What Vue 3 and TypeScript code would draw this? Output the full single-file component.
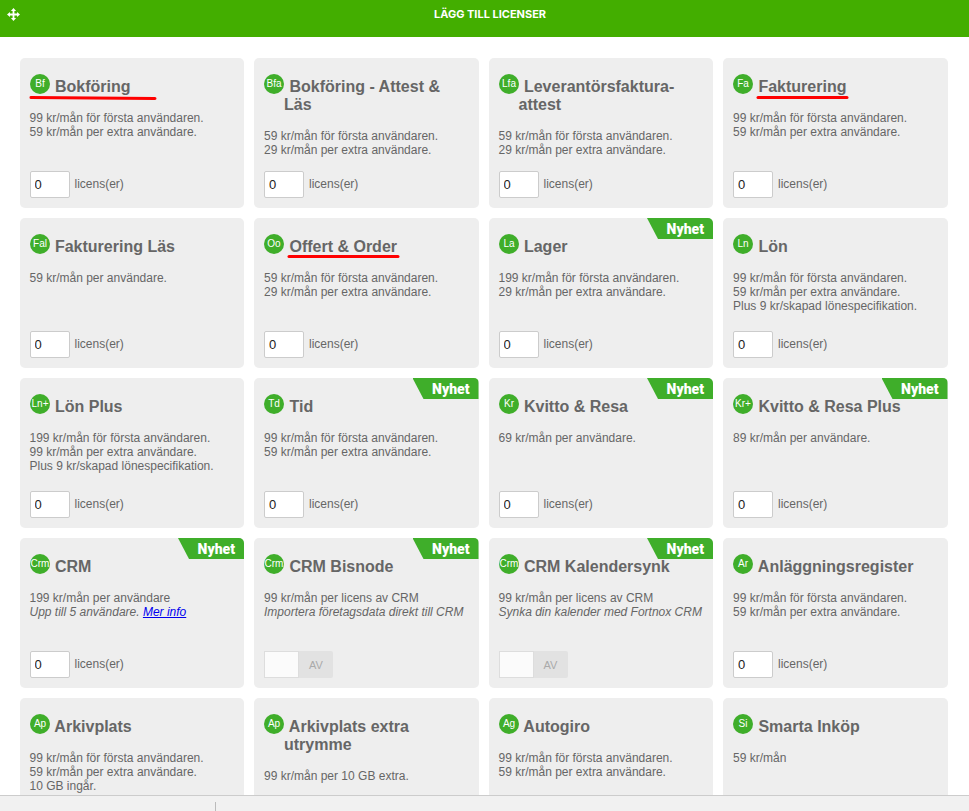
<script setup lang="ts">
import { reactive } from 'vue'

interface Stroke {
  x1: number
  y1: number
  x2: number
  y2: number
}

interface License {
  code: string
  name: string
  lines: string[]
  note?: string
  link?: string
  isNew?: boolean
  toggle?: boolean
  count: string
  mark?: Stroke
}

const licenses = reactive<License[]>([
  { code: 'Bf', name: 'Bokföring', lines: ['99 kr/mån för första användaren.', '59 kr/mån per extra användare.'], count: '0', mark: { x1: 11, y1: 39.5, x2: 135, y2: 40.5 } },
  { code: 'Bfa', name: 'Bokföring - Attest & Läs', lines: ['59 kr/mån för första användaren.', '29 kr/mån per extra användare.'], count: '0' },
  { code: 'Lfa', name: 'Leverantörsfaktura-attest', lines: ['59 kr/mån för första användaren.', '29 kr/mån per extra användare.'], count: '0' },
  { code: 'Fa', name: 'Fakturering', lines: ['99 kr/mån för första användaren.', '59 kr/mån per extra användare.'], count: '0', mark: { x1: 35, y1: 39.5, x2: 124, y2: 39.5 } },
  { code: 'Fal', name: 'Fakturering Läs', lines: ['59 kr/mån per användare.'], count: '0' },
  { code: 'Oo', name: 'Offert & Order', lines: ['59 kr/mån för första användaren.', '29 kr/mån per extra användare.'], count: '0', mark: { x1: 35, y1: 38.5, x2: 144, y2: 38.5 } },
  { code: 'La', name: 'Lager', lines: ['199 kr/mån för första användaren.', '29 kr/mån per extra användare.'], count: '0', isNew: true },
  { code: 'Ln', name: 'Lön', lines: ['99 kr/mån för första användaren.', '59 kr/mån per extra användare.', 'Plus 9 kr/skapad lönespecifikation.'], count: '0' },
  { code: 'Ln+', name: 'Lön Plus', lines: ['199 kr/mån för första användaren.', '99 kr/mån per extra användare.', 'Plus 9 kr/skapad lönespecifikation.'], count: '0' },
  { code: 'Td', name: 'Tid', lines: ['99 kr/mån för första användaren.', '59 kr/mån per extra användare.'], count: '0', isNew: true },
  { code: 'Kr', name: 'Kvitto & Resa', lines: ['69 kr/mån per användare.'], count: '0', isNew: true },
  { code: 'Kr+', name: 'Kvitto & Resa Plus', lines: ['89 kr/mån per användare.'], count: '0', isNew: true },
  { code: 'Crm', name: 'CRM', lines: ['199 kr/mån per användare'], note: 'Upp till 5 användare.', link: 'Mer info', count: '0', isNew: true },
  { code: 'Crm', name: 'CRM Bisnode', lines: ['99 kr/mån per licens av CRM'], note: 'Importera företagsdata direkt till CRM', count: '0', isNew: true, toggle: true },
  { code: 'Crm', name: 'CRM Kalendersynk', lines: ['99 kr/mån per licens av CRM'], note: 'Synka din kalender med Fortnox CRM', count: '0', isNew: true, toggle: true },
  { code: 'Ar', name: 'Anläggningsregister', lines: ['99 kr/mån för första användaren.', '59 kr/mån per extra användare.'], count: '0' },
  { code: 'Ap', name: 'Arkivplats', lines: ['99 kr/mån för första användaren.', '59 kr/mån per extra användare.', '10 GB ingår.'], count: '0' },
  { code: 'Ap', name: 'Arkivplats extra utrymme', lines: ['99 kr/mån per 10 GB extra.'], count: '0' },
  { code: 'Ag', name: 'Autogiro', lines: ['99 kr/mån för första användaren.', '59 kr/mån per extra användare.'], count: '0' },
  { code: 'Si', name: 'Smarta Inköp', lines: ['59 kr/mån'], count: '0' },
])
</script>

<template>
  <div class="page">
    <header class="bar">
      <svg class="move" width="13" height="13" viewBox="0 0 13 13" aria-hidden="true">
        <path d="M6.5 2v9M2 6.5h9" stroke="#fff" stroke-width="1.8" />
        <path d="M6.5 0l2.6 3H3.9zM6.5 13l2.6-3H3.9zM0 6.5l3-2.6v5.2zM13 6.5l-3-2.6v5.2z" fill="#fff" />
      </svg>
      <h1 class="title">LÄGG TILL LICENSER</h1>
    </header>

    <main class="content">
      <div class="grid">
        <section v-for="(item, i) in licenses" :key="i" class="card">
          <h2 class="name">
            <svg class="badge" width="20" height="20" viewBox="0 0 20 20">
              <circle cx="10" cy="10" r="10" fill="#3fae2a" />
              <text class="code" x="10" y="13" text-anchor="middle">{{ item.code }}</text>
            </svg>
            {{ item.name }}
          </h2>
          <p class="info">
            <span v-for="line in item.lines" :key="line" class="line">{{ line }}</span>
            <em v-if="item.note" class="line">{{ item.note }} <a v-if="item.link" href="#">{{ item.link }}</a></em>
          </p>
          <div class="control">
            <button v-if="item.toggle" class="toggle" type="button" role="switch" aria-checked="false" :aria-label="item.name" disabled>
              <span class="knob"></span>
              <span class="state">AV</span>
            </button>
            <template v-else>
              <input :id="`license-${i}`" v-model="item.count" class="count" type="text" inputmode="numeric" />
              <label class="unit" :for="`license-${i}`">licens(er)</label>
            </template>
          </div>
          <span v-if="item.isNew" class="ribbon">Nyhet</span>
          <svg v-if="item.mark" class="mark" aria-hidden="true">
            <line :x1="item.mark.x1" :y1="item.mark.y1" :x2="item.mark.x2" :y2="item.mark.y2" stroke="#f00" stroke-width="3" stroke-linecap="round" />
          </svg>
        </section>
      </div>
    </main>

    <footer class="footer">
      <div class="divider"></div>
    </footer>
  </div>
</template>

<style>
body {
  margin: 0;
  background: #fff;
}
</style>

<style scoped>
.page {
  display: flex;
  flex-direction: column;
  height: 100vh;
  font-family: "Liberation Sans", Arial, sans-serif;
  font-size: 12px;
  line-height: 14px;
  color: #666;
}
.bar {
  display: flex;
  flex: none;
  align-items: flex-start;
  box-sizing: border-box;
  height: 37px;
  padding: 8px 9px 0 7px;
  background: #43ae00;
}
.move {
  display: block;
  flex: none;
}
.title {
  flex: 1;
  margin: 0;
  font-family: Inter, Roboto, sans-serif;
  font-size: 11px;
  line-height: 12px;
  font-weight: 700;
  text-align: center;
  color: #fff;
}
.content {
  flex: 1;
  min-height: 0;
  padding: 21px 2px 0 0;
  overflow-y: auto;
  scrollbar-width: none;
}
.grid {
  display: grid;
  grid-template-columns: repeat(4, minmax(0, 1fr));
  grid-auto-rows: minmax(150px, auto);
  gap: 10px;
  width: calc(100% - 39px);
  margin: 0 auto;
}
.card {
  position: relative;
  display: flex;
  flex-direction: column;
  box-sizing: border-box;
  padding: 16px 10px 10px;
  border-radius: 5px;
  background: #eee;
}
.name {
  margin: 0 0 15px;
  padding-left: 20px;
  font-size: 16px;
  line-height: 18px;
  font-weight: 700;
  text-indent: -20px;
}
.badge {
  margin-right: 1px;
  vertical-align: -2px;
}
.code {
  fill: #fff;
  font-size: 10px;
  font-weight: 400;
  text-indent: 0;
}
.info {
  margin: 0;
}
.line {
  display: block;
  white-space: nowrap;
}
.line a {
  color: #00e;
}
.control {
  display: flex;
  align-items: flex-start;
  gap: 5px;
  margin-top: auto;
}
.unit {
  line-height: 26px;
}
.count {
  box-sizing: border-box;
  width: 40px;
  height: 27px;
  padding: 0 4px;
  border: 1px solid #ccc;
  border-radius: 2px;
  background: #fff;
  font-family: inherit;
  font-size: 13px;
  color: #222;
}
.toggle {
  display: flex;
  width: 69px;
  height: 27px;
  padding: 0;
  border: 0;
  border-radius: 2px;
  background: #e2e2e2;
  font-family: inherit;
  font-size: 11px;
  line-height: 28px;
  color: #aaa;
}
.knob {
  box-sizing: border-box;
  width: 35px;
  height: 27px;
  border: 1px solid #ddd;
  background: #fbfbfb;
}
.state {
  flex: 1;
  text-align: center;
}
.ribbon {
  position: absolute;
  top: 0;
  right: 0;
  box-sizing: border-box;
  width: 66px;
  height: 21px;
  padding-right: 9px;
  border-top-right-radius: 5px;
  background: #3fae2a;
  clip-path: polygon(0 0, 100% 0, 100% 100%, 11px 100%);
  font-family: Roboto, "Liberation Sans", sans-serif;
  font-size: 14px;
  line-height: 22px;
  font-weight: 900;
  text-align: right;
  color: #fff;
}
.mark {
  position: absolute;
  top: 0;
  left: 0;
  width: 100%;
  height: 100%;
  pointer-events: none;
}
.footer {
  flex: none;
  display: flex;
  box-sizing: border-box;
  height: 16px;
  padding: 6px 0 0 215px;
  border-top: 1px solid #ccc;
  background: #f1f1f1;
}
.divider {
  width: 1px;
  background: #bbb;
}
</style>
